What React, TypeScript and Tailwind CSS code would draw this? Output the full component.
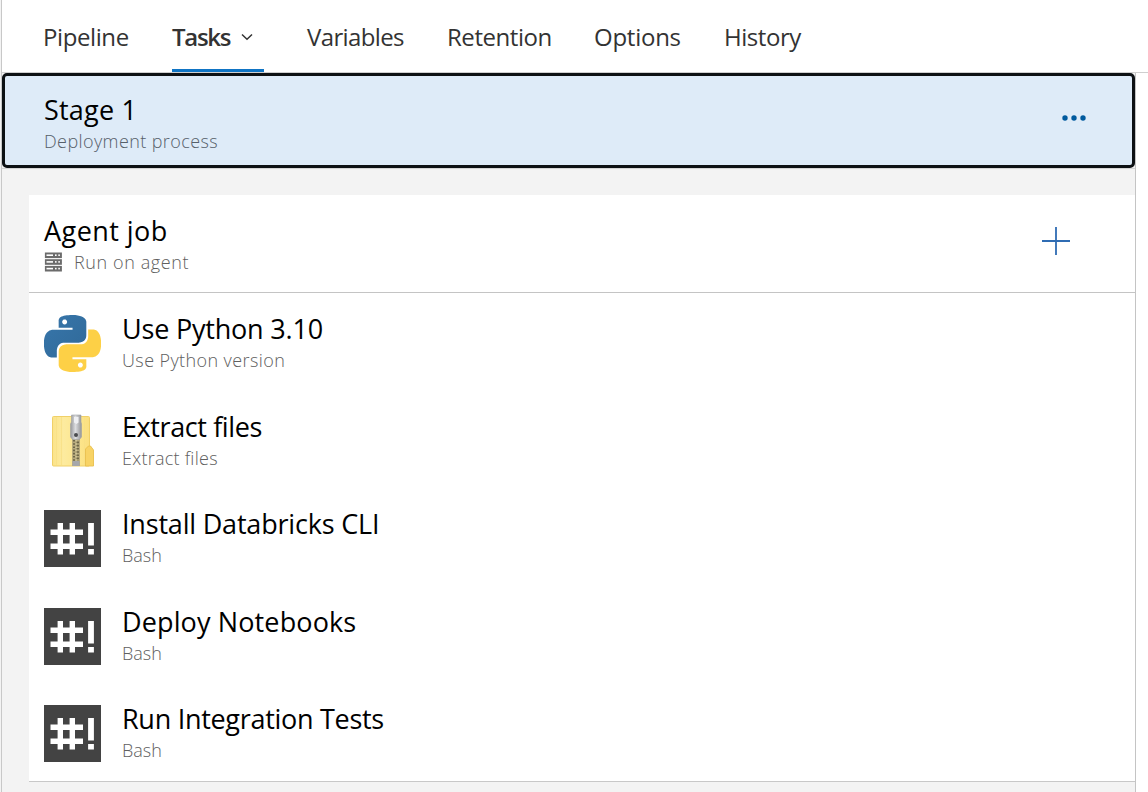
import type { ReactNode } from "react";

const BLUE_SNAKE =
  "M14.25.18l.9.2.73.26.59.3.45.32.34.34.25.34.16.33.1.3.04.26.02.2-.01.13V8.5l-.05.63-.13.55-.21.46-.26.38-.3.31-.33.25-.35.19-.35.14-.33.1-.3.07-.26.04-.21.02H8.77l-.69.05-.59.14-.5.22-.41.27-.33.32-.27.35-.2.36-.15.37-.1.35-.07.32-.04.27-.02.21v3.06H3.17l-.21-.03-.28-.07-.32-.12-.35-.18-.36-.26-.36-.36-.35-.46-.32-.59-.28-.73-.21-.88-.14-1.05-.05-1.23.06-1.22.16-1.04.24-.87.32-.71.36-.57.4-.44.42-.33.42-.24.4-.16.36-.1.32-.05.24-.01h.16l.06.01h8.16v-.83H6.18l-.01-2.75-.02-.37.05-.34.11-.31.17-.28.25-.26.31-.23.38-.2.44-.18.51-.15.58-.12.64-.1.71-.06.77-.04.84-.02 1.27.05zm-6.3 1.98l-.23.33-.08.41.08.41.23.34.33.22.41.09.41-.09.33-.22.23-.34.08-.41-.08-.41-.23-.33-.33-.22-.41-.09-.41.09z";

function PythonIcon() {
  return (
    <svg viewBox="0 0 24 24" className="size-[57px] shrink-0">
      <defs>
        <linearGradient id="pyBlue" x1="0" y1="0" x2="1" y2="1">
          <stop offset="0" stopColor="#3776ab" />
          <stop offset="1" stopColor="#306998" />
        </linearGradient>
      </defs>
      <path d={BLUE_SNAKE} fill="url(#pyBlue)" fillRule="evenodd" />
      <path d={BLUE_SNAKE} fill="#fdd046" fillRule="evenodd" transform="rotate(180 12 12)" />
    </svg>
  );
}

function ZipFolderIcon() {
  return (
    <svg viewBox="0 0 57 57" className="size-[57px] shrink-0">
      <defs>
        <linearGradient id="folder" x1="0" y1="0" x2="1" y2="0">
          <stop offset="0" stopColor="#fbe389" />
          <stop offset="0.3" stopColor="#fdeb9f" />
          <stop offset="0.7" stopColor="#fde68c" />
          <stop offset="1" stopColor="#fbdf80" />
        </linearGradient>
        <linearGradient id="metal" x1="0" y1="0" x2="1" y2="0">
          <stop offset="0" stopColor="#96979a" />
          <stop offset="0.45" stopColor="#dcdde0" />
          <stop offset="1" stopColor="#939497" />
        </linearGradient>
      </defs>
      <rect x="8.5" y="3.5" width="37" height="49.5" rx="1" fill="url(#folder)" stroke="#f0d068" />
      <path d="M12.5 4v48M17.5 4v48M40.500 4v48" stroke="#f8df85" strokeWidth="0.8" />
      <path d="M41.500 53V36l3-3h2l3 4v16z" fill="#f8d365" stroke="#e9c04e" strokeWidth="0.9" />
      <rect x="28" y="26" width="8" height="27" fill="#b8ab7c" />
      <path d="M30.200 27v24" stroke="#6e6748" strokeWidth="2.400" strokeDasharray="1.600 1.600" />
      <path d="M33.800 28.600v22" stroke="#6e6748" strokeWidth="2.400" strokeDasharray="1.600 1.600" />
      <path d="M32 27v24" stroke="#ded6a8" strokeWidth="1.200" strokeDasharray="1.600 1.600" />
      <rect x="28.500" y="48" width="7" height="5" fill="#a6a7aa" />
      <path d="M27.500 2h9.500v7l.5 2v13l-2 2.500h-7l-2-2.500V11l1-2z" fill="url(#metal)" stroke="#a0a1a4" strokeWidth="0.6" />
      <path d="M30 4h4.500v5.500L32.500 11 30 9.500z" fill="#eff0f3" />
      <circle cx="32" cy="22" r="2" fill="#4a4b4e" />
    </svg>
  );
}

function BashIcon() {
  return (
    <svg viewBox="0 0 57 57" className="size-[57px] shrink-0">
      <rect width="57" height="57" fill="#434343" />
      <path
        d="M16.300 13v31.500M28.300 13v31.500M6.500 22.200h32.500M6.500 36.300h32.500"
        stroke="#fff"
        strokeWidth="5.400"
        fill="none"
      />
      <path d="M47 13v22.500M47 39v5.500" stroke="#fff" strokeWidth="5.800" fill="none" />
    </svg>
  );
}

function ServerIcon() {
  return (
    <svg viewBox="0 0 18 20" className="h-5 w-[18px] shrink-0">
      {[0.5, 7.2, 13.9].map((y) => (
        <g key={y} transform={`translate(0 ${y})`}>
          <rect x="0.900" width="17" height="5.600" fill="#6b6b6b" />
          <rect x="2.500" y="1.900" width="6.500" height="1.600" fill="#fff" />
          <rect x="11" y="1.900" width="1.600" height="1.600" fill="#fff" />
          <rect x="14.300" y="1.900" width="1.600" height="1.600" fill="#fff" />
        </g>
      ))}
    </svg>
  );
}

function Task({ icon, title, spacing, sub, subSpacing }: { icon: ReactNode; title: string; spacing: string; sub: string; subSpacing: string }) {
  return (
    <div className="flex h-[97.6px] pl-[15px] pt-[22px]">
      {icon}
      <div className="ml-[21px] whitespace-nowrap">
        <div className={`h-[31px] text-[27px] leading-[27px] text-black ${spacing}`}>{title}</div>
        <div className={`text-[18px] font-light leading-[28px] text-[#606060] ${subSpacing}`}>{sub}</div>
      </div>
    </div>
  );
}

export default function App() {
  return (
    <div className="flex h-[792px] w-[1148px] flex-col overflow-hidden border-l border-[#f3f3f3] bg-white font-['Open_Sans','Noto_Sans',sans-serif]">
      <div className="flex min-h-0 flex-1 flex-col border-l border-[#c8c8c8]">
        <nav className="flex h-[73px] shrink-0 whitespace-nowrap border-b border-[#cfcfcf] pl-[41px] text-[24px] leading-[73px] text-[#333]">
          <div className="w-[129px] tracking-[-0.400px]">Pipeline</div>
          <div className="mr-[43px] flex h-[72px] w-[92px] items-center border-b-[3px] border-[#0f74c4] pt-[3px] font-semibold tracking-[-1.300px]">
            <span className="w-[69px]">Tasks</span>
            <svg viewBox="0 0 12 8" className="mt-0.5 h-2 w-3">
              <path d="M1 1.500l5 4.700 5-4.700" fill="none" stroke="#333" strokeWidth="1.500" />
            </svg>
          </div>
          <div className="w-[140px] tracking-[-0.630px]">Variables</div>
          <div className="w-[147px] tracking-[-0.450px]">Retention</div>
          <div className="w-[130px] tracking-[-0.250px]">Options</div>
          <div className="tracking-[-0.450px]">History</div>
        </nav>
        <div className="flex min-h-0 flex-1">
          <main className="flex w-[1134px] flex-col border-r border-[#c4c4c4] bg-[#f3f3f3]">
            <div className="border-b border-[#d4d4d4]">
              <section className="flex h-[95px] justify-between rounded-[5px] border-[3px] border-[#0d1114] bg-[#deebf8] pl-[39px] pr-[46px] pt-[20px]">
                <div className="whitespace-nowrap">
                  <div className="h-[31px] text-[27px] leading-[27px] tracking-[0.200px] text-black">Stage 1</div>
                  <div className="text-[18px] font-light leading-[28px] tracking-[0.400px] text-[#56606a]">Deployment process</div>
                </div>
                <svg viewBox="0 0 24 6" className="mt-[19px] h-1.5 w-6">
                  <circle cx="3" cy="3" r="2.700" fill="#005a9e" />
                  <circle cx="12" cy="3" r="2.700" fill="#005a9e" />
                  <circle cx="21" cy="3" r="2.700" fill="#005a9e" />
                </svg>
              </section>
            </div>
            <section className="ml-[27px] mt-[26px] h-[587px] border-b border-[#c8c8c8] bg-white">
              <div className="flex h-[98px] justify-between border-b border-[#c4c4c4] pl-[15px] pr-[65px] pt-[22px]">
                <div className="whitespace-nowrap">
                  <div className="h-[31px] text-[27px] leading-[27px] tracking-[0.450px] text-black">Agent job</div>
                  <div className="flex items-center text-[18px] font-light leading-[28px] tracking-[0.600px] text-[#606060]">
                    <ServerIcon />
                    <span className="ml-3">Run on agent</span>
                  </div>
                </div>
                <svg viewBox="0 0 28 28" className="mt-[10px] size-7">
                  <path d="M14 0v28M0 14h28" stroke="#2f6cb3" strokeWidth="1.800" />
                </svg>
              </div>
              <Task icon={<PythonIcon />} title="Use Python 3.10" spacing="tracking-[-0.200px]" sub="Use Python version" subSpacing="tracking-[0.400px]" />
              <Task icon={<ZipFolderIcon />} title="Extract files" spacing="tracking-[-0.400px]" sub="Extract files" subSpacing="tracking-[0.250px]" />
              <Task icon={<BashIcon />} title="Install Databricks CLI" spacing="tracking-[-0.190px]" sub="Bash" subSpacing="" />
              <Task icon={<BashIcon />} title="Deploy Notebooks" spacing="tracking-[0.130px]" sub="Bash" subSpacing="" />
              <Task icon={<BashIcon />} title="Run Integration Tests" spacing="tracking-[-0.290px]" sub="Bash" subSpacing="" />
            </section>
          </main>
        </div>
      </div>
    </div>
  );
}
